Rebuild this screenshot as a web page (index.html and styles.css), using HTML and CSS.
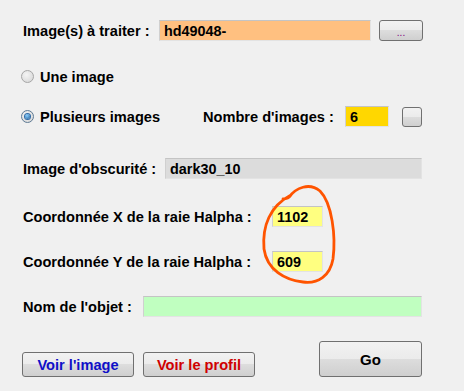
FILE: index.html
```html
<!DOCTYPE html>
<html lang="fr">

<head>
    <meta charset="UTF-8">
    <title>Traitement Halpha</title>
    <link rel="stylesheet" href="styles.css">
</head>

<body>
    <div class="form">
        <div class="row r1">
            <label class="lbl w-img">Image(s) à traiter :</label>
            <input class="box orange w-file" type="text" value="hd49048-">
            <button class="btn dots">...</button>
        </div>

        <div class="row r2">
            <span class="radio"></span>
            <span class="lbl">Une image</span>
        </div>

        <div class="row r3">
            <span class="radio on"></span>
            <span class="lbl w-plus">Plusieurs images</span>
            <span class="lbl w-nb">Nombre d'images :</span>
            <input class="box gold w-nbbox" type="text" value="6">
            <button class="btn tiny"></button>
        </div>

        <div class="row r4">
            <label class="lbl w-dark">Image d'obscurité :</label>
            <input class="box grey w-darkbox" type="text" value="dark30_10" readonly>
        </div>

        <div class="row r5">
            <label class="lbl w-coord">Coordonnée X de la raie Halpha :</label>
            <input class="box yellow w-coordbox" type="text" value="1102">
        </div>

        <div class="row r6">
            <label class="lbl w-coord">Coordonnée Y de la raie Halpha :</label>
            <input class="box yellow w-coordbox" type="text" value="609">
        </div>

        <div class="row r7">
            <label class="lbl w-nom">Nom de l'objet :</label>
            <input class="box green w-nombox" type="text" value="">
        </div>

        <div class="row r8">
            <button class="btn big blue">Voir l'image</button>
            <button class="btn big red">Voir le profil</button>
            <button class="btn go">Go</button>
        </div>
    </div>

    <!-- trait a main levee autour des coordonnees -->
    <svg class="circle" viewBox="0 0 464 391" width="464" height="391">
        <path d="M 289 197 C 296 188, 309 182, 320 191 C 332 203, 336 236, 333 259 C 330 276, 318 284, 303 282 C 285 280, 267 270, 264 249 C 262 226, 270 206, 291 195 M 291 195 C 289 198, 286 199, 283 199" fill="none" stroke="#ff5400" stroke-width="2.8" stroke-linecap="round"/>
    </svg>
</body>

</html>
```

FILE: styles.css
```css
* {
    padding: 0;
    margin: 0;
    box-sizing: border-box;
}

body {
    background: #f0f0f0;
    font-family: "Liberation Sans", Arial, sans-serif;
    font-size: 14.6px;
    font-weight: bold;
    color: #000;
    width: 464px;
    height: 391px;
    overflow: hidden;
}

.form {
    padding-left: 23px;
    display: flex;
    flex-direction: column;
}

.row {
    display: flex;
    align-items: center;
    height: 21px;
}

.r1 { margin-top: 20px; }
.r2 { margin-top: 25px; margin-left: -2px; }
.r3 { margin-top: 19px; margin-left: -2px; }
.r4 { margin-top: 31px; }
.r5 { margin-top: 27px; }
.r6 { margin-top: 24px; }
.r7 { margin-top: 24px; }

.r8 {
    margin-top: 24px;
    height: 36px;
    align-items: flex-end;
    margin-left: -1px;
}

.lbl {
    white-space: nowrap;
}

.w-img { width: 136px; }
.w-plus { width: 163px; }
.w-nb { width: 142px; }
.w-dark { width: 142px; }
.w-coord { width: 249px; }
.w-nom { width: 120px; }

.box {
    height: 21px;
    border: 1px solid #e3e3e3;
    border-top-color: #c4c4c4;
    border-left-color: #d0d0d0;
    font-family: "Liberation Sans", Arial, sans-serif;
    font-size: 14.4px;
    font-weight: bold;
    color: #000;
    padding: 1px 0 0 4px;
    outline: none;
}

.w-file { width: 212px; }
.w-nbbox { width: 44px; }
.w-darkbox { width: 257px; }
.w-coordbox { width: 51px; }
.w-nombox { width: 279px; }

.orange { background: #ffc080; }
.gold { background: #ffd700; }
.grey { background: #dcdcdc; }
.yellow { background: #ffff80; }
.green { background: #c0ffc0; }

.radio {
    width: 13px;
    height: 13px;
    border-radius: 50%;
    border: 1px solid #a6a6a6;
    background: radial-gradient(circle at 40% 35%, #f4f4f4, #d4d4d4);
    margin-right: 6px;
    display: flex;
    align-items: center;
    justify-content: center;
}

.radio.on {
    border-color: #5e7a94;
}

.radio.on::after {
    content: "";
    width: 5px;
    height: 5px;
    border-radius: 50%;
    background: radial-gradient(circle at 40% 35%, #8ad0ff, #1a5a98);
    box-shadow: 0 0 0 1px #2f6aa6;
}

.btn {
    border: 1px solid #707070;
    border-radius: 3px;
    background: linear-gradient(#f2f2f2 0%, #ebebeb 50%, #dddddd 50%, #cfcfcf 100%);
    font-family: "Liberation Sans", Arial, sans-serif;
    font-weight: bold;
    font-size: 14.6px;
    color: #000;
}

.dots {
    width: 44px;
    height: 21px;
    margin-left: 8px;
    font-size: 10px;
    font-weight: normal;
    color: #800080;
    padding-top: 3px;
}

.tiny {
    width: 20px;
    height: 20px;
    margin-left: 13px;
}

.big {
    width: 112px;
    height: 25px;
    padding-top: 1px;
}

.blue { color: #1010c8; }

.red {
    color: #d00000;
    margin-left: 9px;
}

.go {
    width: 103px;
    height: 36px;
    margin-left: 64px;
    font-size: 15px;
}

.circle {
    position: absolute;
    left: 0;
    top: 0;
    pointer-events: none;
}
```
